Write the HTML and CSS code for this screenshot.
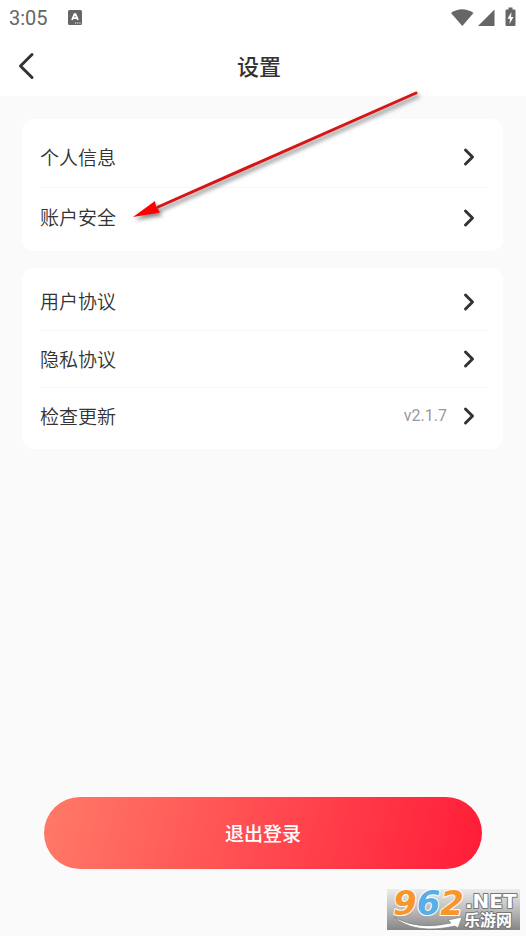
FILE: index.html
```html
<!DOCTYPE html>
<html lang="zh-CN">
<head>
<meta charset="utf-8">
<meta name="viewport" content="width=device-width, initial-scale=1">
<title>设置</title>
<link rel="stylesheet" href="styles.css">
</head>
<body>
<svg class="defs" aria-hidden="true">
  <symbol id="chevron" viewBox="0 0 12 20"><path d="M2.5 3 L9.5 10 L2.5 17"/></symbol>
</svg>
<div class="page">
  <header class="top">
    <div class="status">
      <span class="time">3:05</span>
      <svg class="app-badge" width="14" height="16" viewBox="0 0 14 16" aria-hidden="true">
        <rect width="14" height="15" rx="1.5" fill="#666"/>
        <path d="M4 10 L6.500 4.200 H7.500 L10 10 M5 8.200 H9" fill="none" stroke="#fff" stroke-width="1.8"/>
        <path d="M7 13h1.200M9.200 13h1.200M11.400 13h1.200" stroke="#fff"/>
      </svg>
      <svg class="system" width="68" height="20" viewBox="0 0 68 20" fill="#666" aria-hidden="true">
        <path d="M0 5 Q11 -2.500 22.500 5 L11.300 18 Z"/>
        <path d="M27 18 L43.500 1.500 V18 Z"/>
        <path d="M57.500 -0.500 h4 v2 h2 q1 0 1 1 v14.500 q0 1 -1 1 h-8 q-1 0 -1 -1 v-14.500 q0 -1 1 -1 h2 z"/>
        <path d="M60.500 4 L56.500 10.700 H59 L58.500 16 L62.500 9 H60 Z" fill="#fff"/>
      </svg>
    </div>
    <div class="titlebar">
      <button class="back" type="button" aria-label="返回">
        <svg width="18" height="28" viewBox="0 0 18 28" aria-hidden="true"><path d="M14 2.500 L2.500 14 L14 25.500"/></svg>
      </button>
      <h1>设置</h1>
    </div>
  </header>
  <main>
    <nav class="card account">
      <a class="row" href="#profile"><span class="label">个人信息</span><svg class="chevron"><use href="#chevron"/></svg></a>
      <a class="row" href="#security"><span class="label">账户安全</span><svg class="chevron"><use href="#chevron"/></svg></a>
    </nav>
    <nav class="card about">
      <a class="row" href="#terms"><span class="label">用户协议</span><svg class="chevron"><use href="#chevron"/></svg></a>
      <a class="row" href="#privacy"><span class="label">隐私协议</span><svg class="chevron"><use href="#chevron"/></svg></a>
      <a class="row" href="#update"><span class="label">检查更新</span><span class="version">v2.1.7</span><svg class="chevron"><use href="#chevron"/></svg></a>
    </nav>
  </main>
  <footer><button class="logout" type="button">退出登录</button></footer>

  <svg class="arrow" width="300" height="140" viewBox="0 0 300 140" aria-hidden="true">
    <path class="shaft" d="M28 122 L286 8"/>
    <path class="head" d="M3 132 L25 116 L26 121 L30 127.500 Z"/>
  </svg>

  <svg class="watermark" width="133" height="41" viewBox="0 0 133 41" role="img" aria-label="962.NET 乐游网">
    <defs>
      <linearGradient id="plate" x2="0" y2="1"><stop offset="0" stop-color="#ececec"/><stop offset=".5" stop-color="#bdbdbd"/><stop offset="1" stop-color="#858585"/></linearGradient>
    </defs>
    <rect width="133" height="41" fill="url(#plate)"/>
    <path d="M7 28 Q31 42 64 34 L61 31 L75 28 L71 39 L68 37 Q28 46 7 28 Z" fill="#fff" stroke="#777" stroke-width=".6"/>
    <text class="digits" x="6" y="26"><tspan fill="#f7962a">9</tspan><tspan fill="#5aaee6">6</tspan><tspan fill="#f7962a">2</tspan></text>
    <text class="net" x="78" y="19">.NET</text>
    <text class="site" x="77" y="37">乐游网</text>
  </svg>
</div>
</body>
</html>
```
FILE: styles.css
```css
* { box-sizing: border-box; }

body {
  margin: 0;
  background: #fafafa;
  color: #333;
  font-family: Roboto, "Noto Sans CJK SC", sans-serif;
}

.defs { display: none; }

.page {
  position: relative;
  display: flex;
  flex-direction: column;
  min-height: 100vh;
}

.top { background: #fff; }

.status {
  display: flex;
  align-items: center;
  height: 36px;
  padding: 0 7px 0 9px;
}

.time {
  color: #666;
  font-size: 20px;
  line-height: 36px;
}

.app-badge { margin-left: 20px; }

.system {
  margin-left: auto;
  overflow: visible;
}

.titlebar {
  display: grid;
  grid-template-columns: 40px 1fr 40px;
  align-items: center;
  height: 60px;
  padding: 0 14px 0 10px;
}

.back {
  display: flex;
  padding: 8px;
  border: 0;
  background: none;
}

.back svg {
  fill: none;
  stroke: #333;
  stroke-width: 3;
  stroke-linecap: round;
  stroke-linejoin: round;
}

h1 {
  margin: 0;
  padding: 4px 4px 0 0;
  font-size: 22px;
  font-weight: 500;
  line-height: 32px;
  text-align: center;
}

main {
  display: flex;
  flex: 1;
  flex-direction: column;
  gap: 17px;
  padding: 23px 23px 0 22px;
}

.card {
  padding: 5px 14px 5px 18px;
  border-radius: 12px;
  background: #fff;
}

.account { padding-top: 8px; padding-bottom: 4px; }

.row {
  display: flex;
  align-items: center;
  height: 57px;
  padding-right: 14px;
  color: #333;
  text-decoration: none;
}

.account .row { height: 60px; }

.row + .row { border-top: 1px solid #f7f7f7; }

.label {
  flex: 1;
  padding-top: 3px;
  font-size: 19px;
  font-weight: 350;
  line-height: 28px;
}

.version {
  margin-right: 16px;
  color: #999;
  font-size: 16px;
  line-height: 24px;
}

.chevron {
  width: 12px;
  height: 20px;
  fill: none;
  stroke: #333;
  stroke-width: 3;
  stroke-linecap: round;
  stroke-linejoin: round;
}

footer { padding: 24px 44px 67px; }

.logout {
  width: 100%;
  height: 72px;
  padding: 4px 0 0;
  border: 0;
  border-radius: 36px;
  background: linear-gradient(105deg, #ff7a68, #ff1c38);
  color: #fff;
  font: 500 19px/28px Roboto, "Noto Sans CJK SC", sans-serif;
}

.arrow {
  position: absolute;
  top: 85px;
  left: 130px;
  filter: drop-shadow(2px 3px 2px rgba(0, 0, 0, .5));
  pointer-events: none;
}

.shaft {
  stroke: #d81414;
  stroke-width: 3;
  stroke-linecap: round;
}

.head { fill: #f00; }

.watermark {
  position: absolute;
  right: 6px;
  bottom: 6px;
  overflow: visible;
}

.watermark text {
  stroke: #fff;
  stroke-width: 2;
  stroke-linejoin: round;
  paint-order: stroke;
}

.digits { font: italic bold 34px "DejaVu Sans", sans-serif; }

.watermark .net {
  fill: #fff;
  stroke: #777;
  font: bold 20px "DejaVu Sans", sans-serif;
}

.watermark .site {
  fill: #fff;
  stroke: #777;
  font: bold 16px "Noto Sans CJK SC", sans-serif;
}
```
